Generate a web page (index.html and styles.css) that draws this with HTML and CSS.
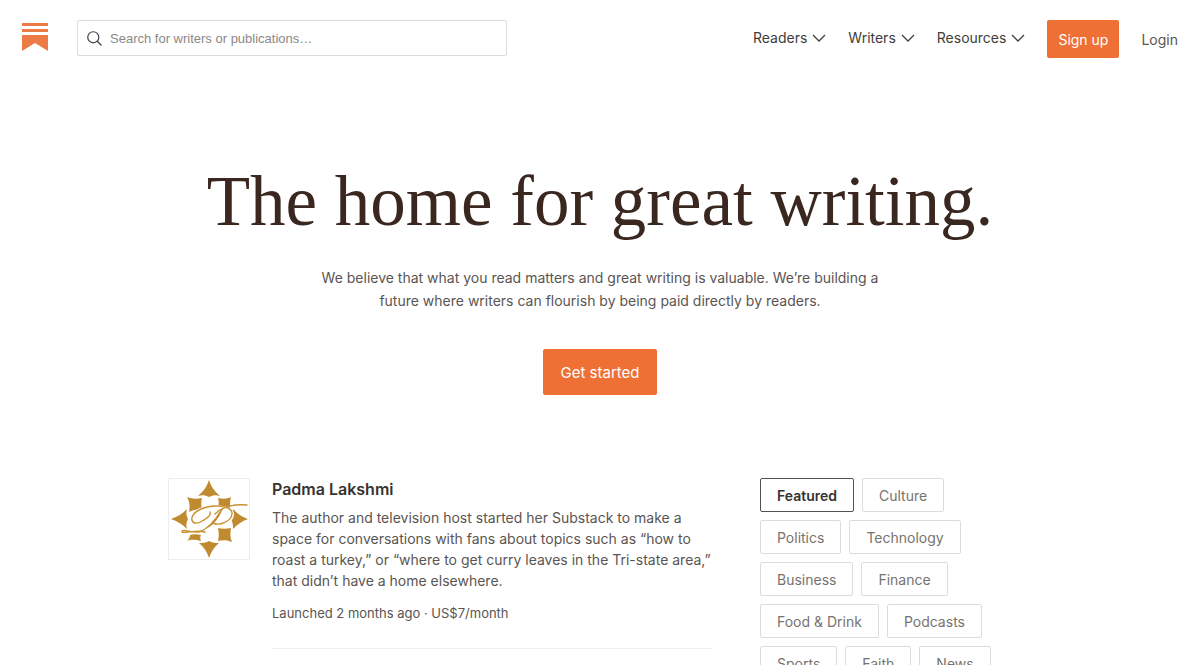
FILE: index.html
```
<!DOCTYPE html>
<html lang="en">
<head>
<meta charset="utf-8">
<meta name="viewport" content="width=device-width, initial-scale=1">
<title>Substack</title>
<link rel="stylesheet" href="styles.css">
</head>

<body>
<header class="topbar">
  <a class="logo" href="#" aria-label="Substack">
    <svg width="26" height="29" viewBox="0 0 26 29" fill="#ec7b45">
      <rect width="26" height="3"/>
      <rect y="6" width="26" height="3"/>
      <path d="M0 12h26v16L13 20 0 28z"/>
    </svg>
  </a>

  <form class="search">
    <svg class="search-icon" width="15" height="15" viewBox="0 0 16 16" fill="none" stroke="#404040" stroke-width="1.3">
      <circle cx="6.7" cy="6.7" r="5.9"/>
      <path d="M10.9 10.9l4.6 4.6"/>
    </svg>
    <input type="text" aria-label="Search" placeholder="Search for writers or publications…">
  </form>

  <nav class="menu">
    <button class="menu-item" type="button">Readers
      <svg width="14" height="8" viewBox="0 0 14 8" fill="none" stroke="#404040" stroke-width="1.3"><path d="M1 1l6 6 6-6"/></svg>
    </button>
    <button class="menu-item" type="button">Writers
      <svg width="14" height="8" viewBox="0 0 14 8" fill="none" stroke="#404040" stroke-width="1.3"><path d="M1 1l6 6 6-6"/></svg>
    </button>
    <button class="menu-item" type="button">Resources
      <svg width="14" height="8" viewBox="0 0 14 8" fill="none" stroke="#404040" stroke-width="1.3"><path d="M1 1l6 6 6-6"/></svg>
    </button>
  </nav>

  <div class="account">
    <button class="button" type="button">Sign up</button>
    <a class="login" href="#">Login</a>
  </div>
</header>

<section class="hero">
  <h1>The home for great writing.</h1>
  <p>We believe that what you read matters and great writing is valuable. We’re building a future where writers can flourish by being paid directly by readers.</p>
  <button class="button button-large" type="button">Get started</button>
</section>

<main class="discover">
  <article class="publication">
    <a class="publication-logo" href="#" aria-label="Padma Lakshmi">
      <svg width="80" height="80" viewBox="0 0 80 80" fill="#c08a30">
        <path d="M40 1c2 6 5 11 11 16-4-1-7-1-11 1-4-2-7-2-11-1 6-5 9-10 11-16z"/>
        <path d="M40 79c2-6 5-11 10-15-4 0-6 0-10-2-4 2-6 2-10 2 5 4 8 9 10 15z"/>
        <path d="M2 40c6-2 11-5 16-10-1 4-1 6 1 10-2 4-2 6-1 10-5-5-10-8-16-10z"/>
        <path d="M79 40c-6-2-10-5-15-10 0 4 0 6-2 10 2 4 2 6 2 10 5-5 9-8 15-10z"/>
        <path d="M18 18c5 2 10 2 15 1-1 4-1 8 0 12-5-1-9 0-13 2 1-5 1-10-2-15z"/>
        <path d="M62 18c-4 2-8 2-13 1 1 3 1 6 0 9 4-1 8 0 12 1 0-4 0-7 1-11z"/>
        <path d="M63 63c-5-2-9-2-14-1 1-4 1-8 0-13 4 1 8 1 13 0-1 5-1 9 1 14z"/>
        <path d="M18 62c5-2 9-1 14 0-1-2-1-4 0-6-4-1-7-1-11 0 0 2-1 4-3 6z"/>
        <g fill="none" stroke="#fff" stroke-width="4">
          <path d="M33 43C21 46 21 35 31 31c14-5 33-3 32 5-1 8-13 11-19 8"/>
          <path d="M54 30C47 42 40 51 29 53"/>
        </g>
        <g fill="none" stroke="#c99232" stroke-width="1.4" stroke-linecap="round">
          <path d="M35 41C22 50 18 37 30 31c14-7 34-4 33 4-1 8-13 12-19 9"/>
          <path d="M46 35c7-8 21-10 32-9"/>
          <path d="M53 30C46 42 39 50 30 53c-7 1-15-3-17-1-1 4 14-2 23 1"/>
          <path d="M35 41c5-3 7-6 6-8"/>
        </g>
        <path d="M54 29c-5 6-10 16-17 21 7-3 14-12 17-21z"/>
      </svg>
    </a>
    <div class="publication-body">
      <h2>Padma Lakshmi</h2>
      <p class="description">The author and television host started her Substack to make a space for conversations with fans about topics such as “how to roast a turkey,” or “where to get curry leaves in the Tri-state area,” that didn’t have a home elsewhere.</p>
      <p class="meta">Launched 2 months ago · US$7/month</p>
    </div>
  </article>

  <aside class="categories">
    <button class="category active" type="button">Featured</button>
    <button class="category" type="button">Culture</button>
    <button class="category" type="button">Politics</button>
    <button class="category" type="button">Technology</button>
    <button class="category" type="button">Business</button>
    <button class="category" type="button">Finance</button>
    <button class="category" type="button">Food &amp; Drink</button>
    <button class="category" type="button">Podcasts</button>
    <button class="category" type="button">Sports</button>
    <button class="category" type="button">Faith</button>
    <button class="category" type="button">News</button>
  </aside>
</main>
</body>
</html>
```
FILE: styles.css
```
* {
  box-sizing: border-box;
}

body {
  margin: 0;
  background: #fff;
  color: #5a5552;
  font-family: Inter, "Liberation Sans", sans-serif;
  font-size: 14px;
}

h1, h2, p {
  margin: 0;
}

button, input {
  font: inherit;
  color: inherit;
}

button {
  padding: 0;
  border: none;
  background: none;
  cursor: pointer;
}

a {
  color: inherit;
  text-decoration: none;
}

svg {
  display: block;
}

/* header */
.topbar {
  display: flex;
  align-items: flex-start;
  padding: 20px 22px 0;
}

.logo {
  margin: 3px 29px 0 0;
}

.search {
  display: flex;
  align-items: center;
  gap: 8px;
  flex: 0 1 430px;
  height: 36px;
  padding: 0 9px;
  border: 1px solid #dcdcdc;
  border-radius: 2px;
}

.search-icon {
  flex: none;
}

.search input {
  flex: 1;
  min-width: 0;
  padding: 0;
  border: none;
  outline: none;
  background: none;
  font-family: "Liberation Sans", Arial, sans-serif;
  font-size: 13px;
}

.search input::placeholder {
  color: #8c8884;
  opacity: 1;
}

.menu {
  display: flex;
  gap: 22px;
  margin-left: auto;
}

.menu-item {
  display: flex;
  align-items: center;
  gap: 5px;
  height: 35px;
  color: #423d3a;
}

.account {
  display: flex;
  align-items: center;
  gap: 22px;
  margin-left: 22px;
}

.button {
  height: 38px;
  padding: 0 11px;
  border-radius: 2px;
  background: #ee7035;
  color: #fff;
}

/* hero */
.hero {
  display: flex;
  flex-direction: column;
  align-items: center;
  padding: 103px 24px 0;
  text-align: center;
}

.hero h1 {
  color: #3a2820;
  font-family: "Liberation Serif", "Times New Roman", serif;
  font-size: 71px;
  font-weight: 400;
  line-height: 80px;
}

.hero p {
  max-width: 580px;
  margin-top: 25px;
  line-height: 23px;
}

.button-large {
  height: 46px;
  margin-top: 37px;
  padding: 0 18px;
  font-size: 15px;
}

/* publications and categories */
.discover {
  display: grid;
  grid-template-columns: minmax(0, 2fr) minmax(0, 1fr);
  align-items: start;
  gap: 48px;
  max-width: 864px;
  margin: 83px auto 0;
}

.publication {
  display: flex;
  gap: 22px;
}

.publication-logo {
  flex: none;
  align-self: flex-start;
  border: 1px solid #ececec;
}

.publication-body {
  flex: 1;
  padding-bottom: 25px;
  border-bottom: 1px solid #ececec;
}

.publication h2 {
  color: #363230;
  font-size: 16px;
  font-weight: 600;
  line-height: 23px;
}

.description {
  margin-top: 6px;
  line-height: 21px;
}

.meta {
  margin-top: 12px;
  font-size: 13px;
  line-height: 20px;
}

.categories {
  display: flex;
  flex-wrap: wrap;
  gap: 8px;
  padding-right: 32px;
}

.category {
  height: 34px;
  padding: 0 16px;
  border: 1px solid #dcdcdc;
  border-radius: 2px;
  color: #77736f;
}

.category.active {
  border-color: #55504d;
  color: #363230;
  font-weight: 600;
}
```
